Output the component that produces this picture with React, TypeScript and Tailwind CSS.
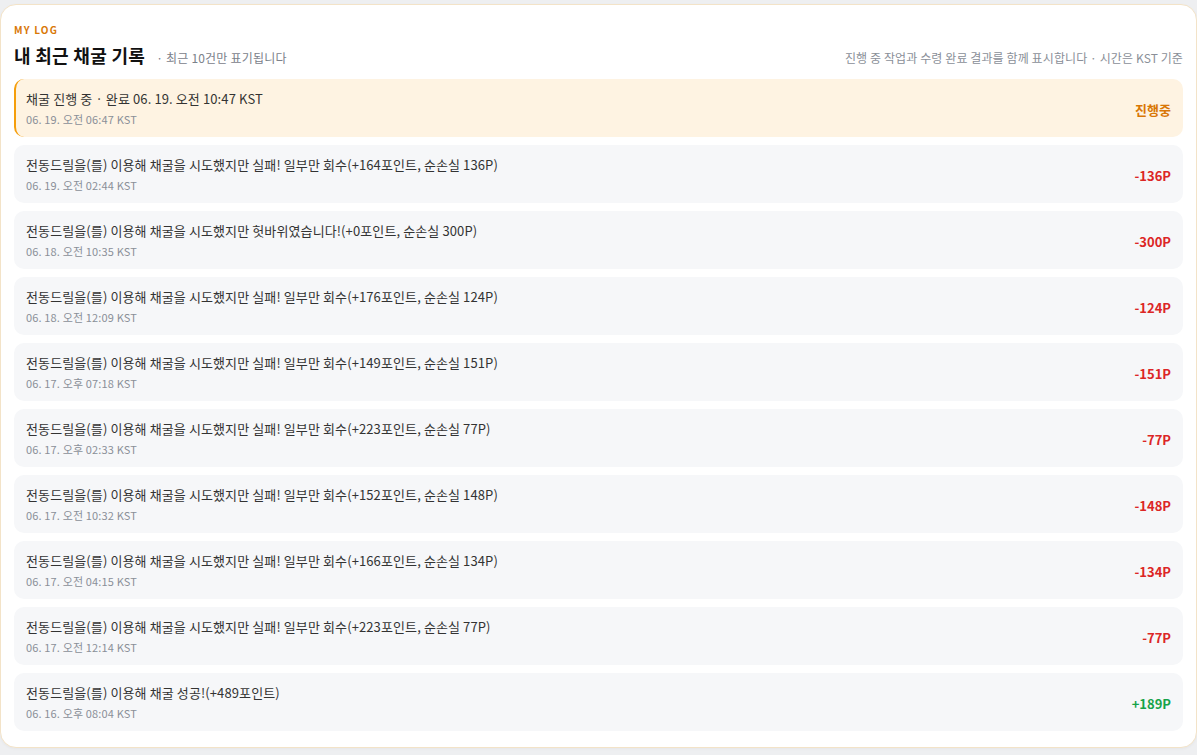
import React from "react";

type Entry = { title: string; time: string; amount: string; kind: "loss" | "gain" | "progress" };

const entries: Entry[] = [
  { title: "채굴 진행 중 · 완료 06. 19. 오전 10:47 KST", time: "06. 19. 오전 06:47 KST", amount: "진행중", kind: "progress" },
  { title: "전동드릴을(를) 이용해 채굴을 시도했지만 실패! 일부만 회수(+164포인트, 순손실 136P)", time: "06. 19. 오전 02:44 KST", amount: "-136P", kind: "loss" },
  { title: "전동드릴을(를) 이용해 채굴을 시도했지만 헛바위였습니다!(+0포인트, 순손실 300P)", time: "06. 18. 오전 10:35 KST", amount: "-300P", kind: "loss" },
  { title: "전동드릴을(를) 이용해 채굴을 시도했지만 실패! 일부만 회수(+176포인트, 순손실 124P)", time: "06. 18. 오전 12:09 KST", amount: "-124P", kind: "loss" },
  { title: "전동드릴을(를) 이용해 채굴을 시도했지만 실패! 일부만 회수(+149포인트, 순손실 151P)", time: "06. 17. 오후 07:18 KST", amount: "-151P", kind: "loss" },
  { title: "전동드릴을(를) 이용해 채굴을 시도했지만 실패! 일부만 회수(+223포인트, 순손실 77P)", time: "06. 17. 오후 02:33 KST", amount: "-77P", kind: "loss" },
  { title: "전동드릴을(를) 이용해 채굴을 시도했지만 실패! 일부만 회수(+152포인트, 순손실 148P)", time: "06. 17. 오전 10:32 KST", amount: "-148P", kind: "loss" },
  { title: "전동드릴을(를) 이용해 채굴을 시도했지만 실패! 일부만 회수(+166포인트, 순손실 134P)", time: "06. 17. 오전 04:15 KST", amount: "-134P", kind: "loss" },
  { title: "전동드릴을(를) 이용해 채굴을 시도했지만 실패! 일부만 회수(+223포인트, 순손실 77P)", time: "06. 17. 오전 12:14 KST", amount: "-77P", kind: "loss" },
  { title: "전동드릴을(를) 이용해 채굴 성공!(+489포인트)", time: "06. 16. 오후 08:04 KST", amount: "+189P", kind: "gain" },
];

function Row({ e }: { e: Entry }) {
  const progress = e.kind === "progress";
  const box = progress
    ? "bg-[#fef3e2] border-l-2 border-[#f59e0b] pl-[10px]"
    : "bg-[#f6f7f9] pl-[12px]";
  const amountColor =
    e.kind === "progress" ? "text-[#d97706]" : e.kind === "gain" ? "text-[#16a34a]" : "text-[#dc2626]";
  return (
    <div className={`flex h-[58px] shrink-0 items-center justify-between rounded-[10px] pr-[12px] pt-[1px] ${box}`}>
      <div className="flex flex-col">
        <div className="text-[13px] leading-[18px] tracking-[0.11px] text-[#333333]">{e.title}</div>
        <div className="mt-[3px] text-[11px] leading-[16px] tracking-[0.15px] text-[#8a8f98]">{e.time}</div>
      </div>
      <div className={`text-[13px] font-bold leading-[18px] pt-[2px] ${amountColor}`}>{e.amount}</div>
    </div>
  );
}

export default function App() {
  return (
    <div
      className="min-h-[755px] bg-[#eeeff1] pt-[4px] pb-[7px]"
      style={{ fontFamily: '"Noto Sans CJK KR", "Noto Sans", sans-serif' }}
    >
      <div className="rounded-[16px] border border-[#f3e3c8] bg-white px-[13px] pt-[18px] pb-[16px] shadow-[0_1px_3px_rgba(0,0,0,0.04)]">
        <div className="text-[10px] font-bold leading-[14px] tracking-[0.12em] text-[#d97706]">MY LOG</div>
        <div className="mt-[5px] mb-[11px] flex items-end justify-between">
          <div className="flex items-baseline">
            <h2 className="text-[18px] font-bold leading-[26px] tracking-[0.3px] text-[#111111]">내 최근 채굴 기록</h2>
            <span className="ml-[11px] text-[12px] leading-[18px] tracking-[0.2px] text-[#7b818a]">· 최근 10건만 표기됩니다</span>
          </div>
          <div className="mb-[1px] text-[12px] leading-[18px] tracking-[0.1px] text-[#8a8f98]">
            진행 중 작업과 수령 완료 결과를 함께 표시합니다 · 시간은 KST 기준
          </div>
        </div>
        <div className="flex flex-col gap-[8px]">
          {entries.map((e, i) => (
            <Row key={i} e={e} />
          ))}
        </div>
      </div>
    </div>
  );
}
